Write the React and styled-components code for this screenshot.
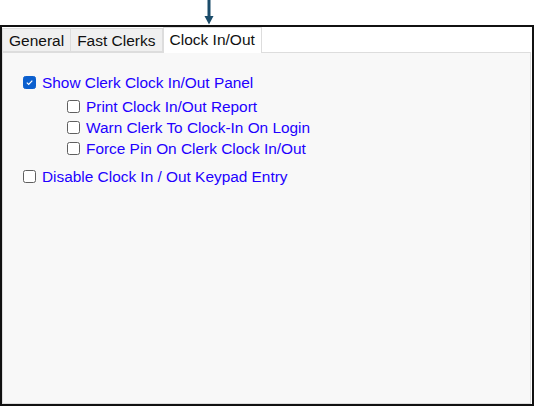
import React from "react";
import styled, { createGlobalStyle } from "styled-components";

const GlobalStyle = createGlobalStyle`
  html, body {
    margin: 0;
    padding: 0;
    background: #ffffff;
  }
  body {
    font-family: "Liberation Sans", Arial, sans-serif;
  }
`;

const Page = styled.div`
  width: 534px;
  height: 406px;
  display: flex;
  flex-direction: column;
  box-sizing: border-box;
`;

const ArrowBar = styled.div`
  height: 25px;
  position: relative;
  svg {
    position: absolute;
    left: 204px;
    top: 0;
  }
`;

const Frame = styled.div`
  flex: 1;
  border: 2px solid #111;
  display: flex;
  flex-direction: column;
  background: #fff;
`;

const TabStrip = styled.div`
  display: flex;
  align-items: flex-end;
  height: 25px;
  position: relative;
  z-index: 1;
`;

const Tab = styled.div`
  box-sizing: border-box;
  height: ${(p) => (p.active ? "26px" : "24px")};
  margin-bottom: ${(p) => (p.active ? "-1px" : "0")};
  padding: 2px 6px 0 6px;
  border: 1px solid #dddddd;
  border-bottom: ${(p) => (p.active ? "none" : "1px solid #dddddd")};
  border-left: ${(p) => (p.first || p.active ? "1px solid #dddddd" : "none")};
  background: ${(p) => (p.active ? "#ffffff" : "#f0f0f0")};
  font-size: 15.5px;
  line-height: ${(p) => (p.active ? "19px" : "20px")};
  color: #111;
  white-space: nowrap;
`;

const Panel = styled.div`
  flex: 1;
  background: #f8f8f8;
  border: 1px solid #dddddd;
  margin-right: 1px;
  padding: 19px 20px;
`;

const Row = styled.label`
  display: flex;
  align-items: center;
  gap: 6px;
  height: 21px;
  margin-left: ${(p) => p.indent || 0}px;
  margin-top: ${(p) => p.gapTop || 0}px;
  font-size: 15.4px;
  color: #2200ff;
  white-space: nowrap;
`;

const Box = styled.span`
  box-sizing: border-box;
  width: 13px;
  height: 13px;
  border-radius: 2.5px;
  border: 1px solid ${(p) => (p.checked ? "#0b5fce" : "#5f5f5f")};
  background: ${(p) => (p.checked ? "#0b5fce" : "#ffffff")};
  display: flex;
  align-items: center;
  justify-content: center;
  flex-shrink: 0;
`;

const Check = ({ checked }) => (
  <Box checked={checked}>
    {checked && (
      <svg width="9" height="9" viewBox="0 0 9 9">
        <path d="M1.8 4.6 L3.7 6.4 L7.3 2.6" fill="none" stroke="#fff" strokeWidth="1.2" />
      </svg>
    )}
  </Box>
);

const items = [
  { label: "Show Clerk Clock In/Out Panel", checked: true },
  { label: "Print Clock In/Out Report", indent: 44, gapTop: 3 },
  { label: "Warn Clerk To Clock-In On Login", indent: 44 },
  { label: "Force Pin On Clerk Clock In/Out", indent: 44 },
  { label: "Disable Clock In / Out Keypad Entry", gapTop: 7 },
];

export default function App() {
  return (
    <>
      <GlobalStyle />
      <Page>
        <ArrowBar>
          <svg width="10" height="25" viewBox="0 0 10 25">
            <rect x="3.5" y="0" width="3" height="17" fill="#1b4c6a" />
            <polygon points="0.5,16 9.5,16 5,24.5" fill="#1b4c6a" />
          </svg>
        </ArrowBar>
        <Frame>
          <TabStrip>
            <Tab first>General</Tab>
            <Tab>Fast Clerks</Tab>
            <Tab active>Clock In/Out</Tab>
          </TabStrip>
          <Panel>
            {items.map((it) => (
              <Row key={it.label} indent={it.indent} gapTop={it.gapTop}>
                <Check checked={it.checked} />
                {it.label}
              </Row>
            ))}
          </Panel>
        </Frame>
      </Page>
    </>
  );
}
